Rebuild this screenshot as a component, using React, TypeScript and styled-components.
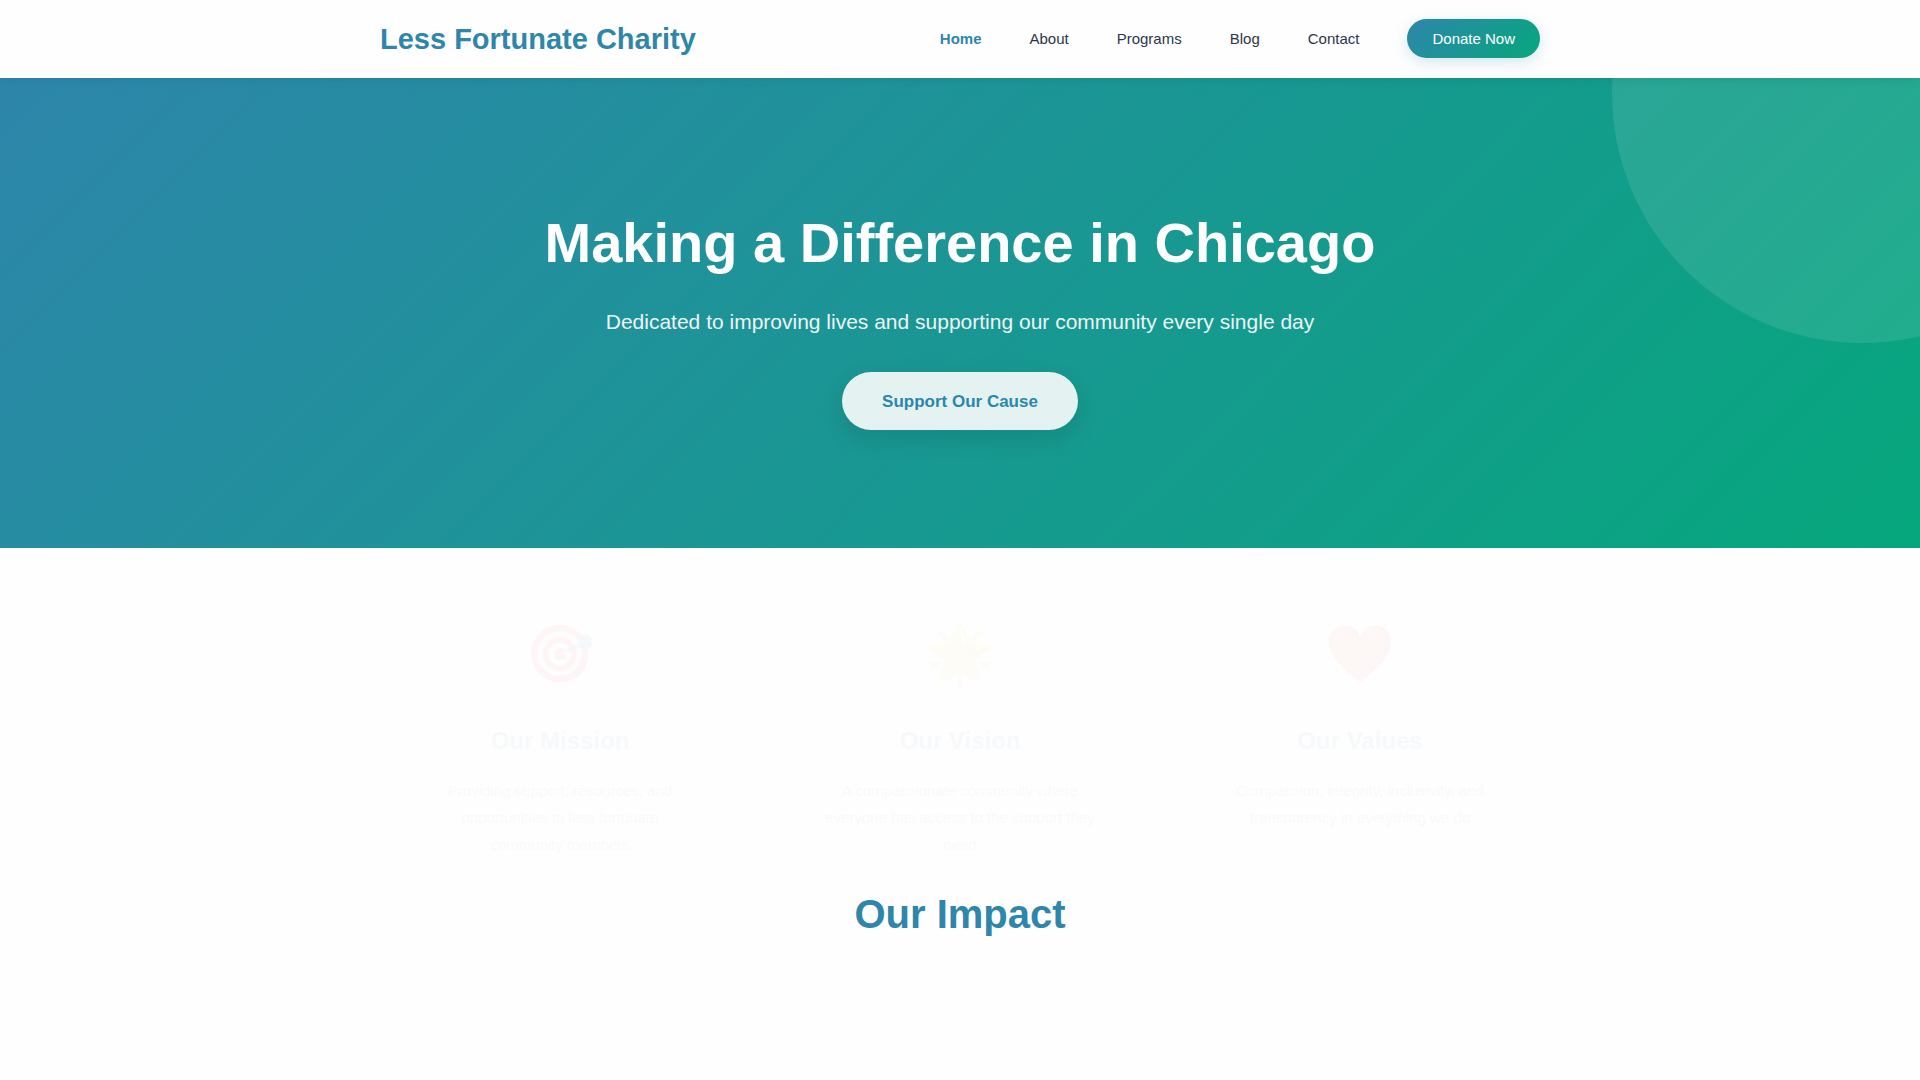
import React from 'react';
import styled, { createGlobalStyle } from 'styled-components';

const GlobalStyle = createGlobalStyle`
  *, *::before, *::after { box-sizing: border-box; margin: 0; padding: 0; }
  body {
    font-family: "Liberation Sans", Arial, sans-serif;
    font-size: 15px;
    line-height: 27px;
    color: #2d3748;
    background: #fefefe;
    overflow-x: hidden;
  }
`;

const Container = styled.div`
  max-width: 1200px;
  margin: 0 auto;
  padding: 0 20px;
`;

const Header = styled.header`
  position: relative;
  z-index: 10;
  background: #fefefe;
  box-shadow: 0 2px 10px rgba(0, 0, 0, 0.08);
`;

const Bar = styled(Container)`
  display: flex;
  align-items: flex-start;
  justify-content: space-between;
  padding-top: 19px;
  padding-bottom: 19px;
`;

const Logo = styled.a`
  color: #2e86ab;
  font-size: 29px;
  font-weight: 700;
  line-height: 40px;
  text-decoration: none;
`;

const Nav = styled.nav`
  display: flex;
  align-items: center;
  gap: 48px;
`;

const NavLink = styled.a<{ $active?: boolean }>`
  color: ${(p) => (p.$active ? '#2e86ab' : '#2d3748')};
  font-size: 15px;
  font-weight: ${(p) => (p.$active ? 700 : 400)};
  text-decoration: none;
`;

const DonateButton = styled.button`
  padding: 6px 25px;
  border: 0;
  border-radius: 25px;
  background: linear-gradient(135deg, #2e86ab, #06a77d);
  box-shadow: 0 4px 15px rgba(46, 134, 171, 0.2);
  color: #fefefe;
  font: inherit;
  font-size: 15px;
  cursor: pointer;
`;

const Hero = styled.section`
  position: relative;
  overflow: hidden;
  padding: 120px 0 118px;
  background: linear-gradient(135deg, #2e86ab 0%, #06a77d 100%);
  color: #fefefe;
  text-align: center;

  &::before {
    content: '';
    position: absolute;
    top: -50%;
    right: -10%;
    width: 500px;
    height: 500px;
    border-radius: 50%;
    background: rgba(255, 255, 255, 0.1);
  }
`;

const HeroContent = styled(Container)`
  position: relative;
`;

const HeroTitle = styled.h1`
  margin-bottom: 16px;
  font-size: 56px;
  line-height: 90px;
`;

const HeroText = styled.p`
  margin-bottom: 32px;
  font-size: 21px;
  line-height: 36px;
  opacity: 0.92;
`;

const CauseButton = styled.button`
  display: block;
  margin: 0 auto;
  padding: 16px 40px 15px;
  border: 0;
  border-radius: 50px;
  background: #fefefe;
  box-shadow: 0 8px 25px rgba(0, 0, 0, 0.12);
  color: #2e86ab;
  font: inherit;
  font-size: 17px;
  font-weight: 700;
  opacity: 0.89;
  cursor: pointer;
`;

const Features = styled.section`
  padding-top: 40px;
`;

const Cards = styled(Container)`
  display: grid;
  grid-template-columns: repeat(3, 1fr);
  gap: 40px;
`;

const Card = styled.article`
  padding: 18px 40px 0;
  text-align: center;
  opacity: 0.03;
`;

const Emoji = styled.div`
  margin-bottom: 20px;
  font-family: "Liberation Sans", "Noto Color Emoji", sans-serif;
  font-size: 56px;
  line-height: 95px;
`;

const CardTitle = styled.h2`
  margin-bottom: 16px;
  color: #2e86ab;
  font-size: 24px;
  line-height: 40px;
`;

const CardText = styled.p`
  color: #718096;
`;

const Impact = styled.section`
  padding: 22px 0 80px;
`;

const ImpactTitle = styled.h2`
  color: #2e86ab;
  font-size: 40px;
  line-height: 68px;
  text-align: center;
`;

const links = ['Home', 'About', 'Programs', 'Blog', 'Contact'];

const cards = [
  {
    icon: '🎯',
    title: 'Our Mission',
    text: 'Providing support, resources, and opportunities to less fortunate community\u00a0members',
  },
  {
    icon: '🌟',
    title: 'Our Vision',
    text: 'A compassionate community where everyone has access to the support they need',
  },
  {
    icon: '❤️',
    title: 'Our Values',
    text: 'Compassion, integrity, inclusivity, and transparency in everything we do',
  },
];

export default function App() {
  return (
    <>
      <GlobalStyle />
      <Header>
        <Bar>
          <Logo href="#home">Less Fortunate Charity</Logo>
          <Nav aria-label="Main">
            {links.map((label) => (
              <NavLink key={label} href={`#${label.toLowerCase()}`} $active={label === 'Home'}>
                {label}
              </NavLink>
            ))}
            <DonateButton type="button">Donate Now</DonateButton>
          </Nav>
        </Bar>
      </Header>
      <main>
        <Hero>
          <HeroContent>
            <HeroTitle>Making a Difference in Chicago</HeroTitle>
            <HeroText>
              Dedicated to improving lives and supporting our community every single day
            </HeroText>
            <CauseButton type="button">Support Our Cause</CauseButton>
          </HeroContent>
        </Hero>
        <Features>
          <Cards>
            {cards.map((card) => (
              <Card key={card.title}>
                <Emoji aria-hidden="true">{card.icon}</Emoji>
                <CardTitle>{card.title}</CardTitle>
                <CardText>{card.text}</CardText>
              </Card>
            ))}
          </Cards>
        </Features>
        <Impact>
          <ImpactTitle>Our Impact</ImpactTitle>
        </Impact>
      </main>
    </>
  );
}
